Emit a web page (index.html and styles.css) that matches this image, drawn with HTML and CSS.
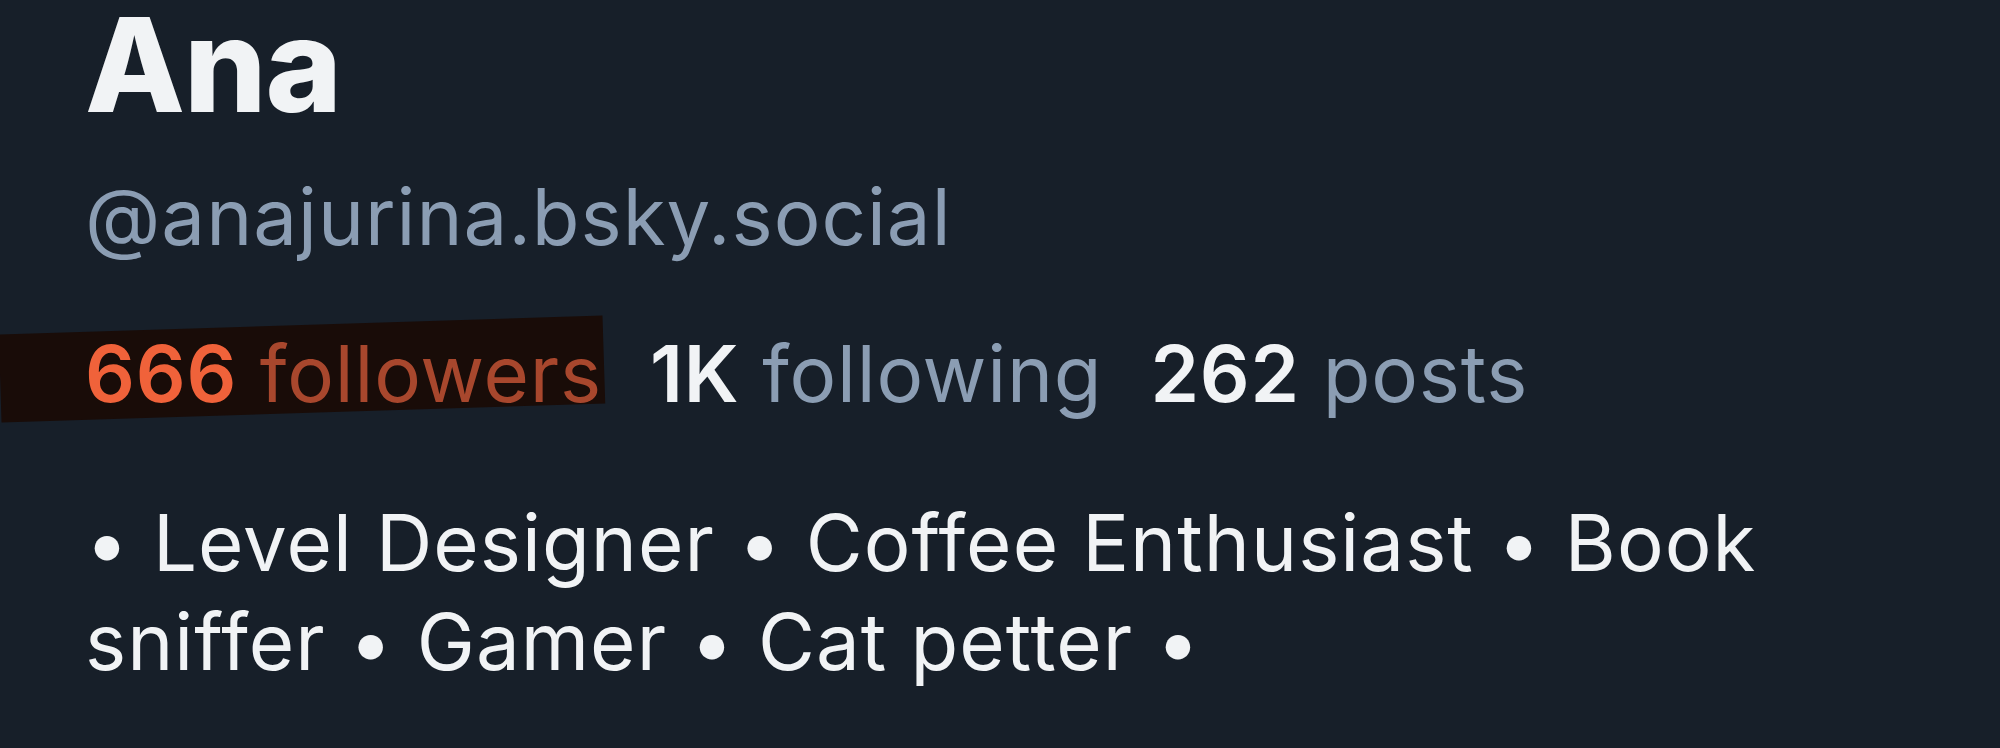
FILE: index.html
```html
<!DOCTYPE html>
<html>
    <head>
        <meta charset="UTF-8">
        <title>Ana - profile</title>
        <link rel="stylesheet" href="styles.css">
    </head>
    <body>
        <div id="profile">
            <div class="name">Ana</div>
            <div class="handle">@anajurina.bsky.social</div>
            <div class="stats">
                <span class="stat marked"><b>666</b> followers</span>
                <span class="stat"><b>1K</b> following</span>
                <span class="stat"><b>262</b> posts</span>
            </div>
            <p class="bio">• Level Designer • Coffee Enthusiast • Book sniffer • Gamer • Cat petter •</p>
        </div>
    </body>
</html>
```

FILE: styles.css
```css
body{
    margin: 0;
    background: #171f29;
    color: #f1f3f5;
    font-family: Inter, "Noto Sans", sans-serif;
    overflow: hidden;
}

#profile{
    padding-left: 85px;
    max-width: 1800px;
}

.name{
    margin-top: -13px;
    font-size: 130px;
    line-height: 156px;
    font-weight: 800;
    letter-spacing: -1px;
}

.handle{
    margin-top: 24px;
    font-size: 78px;
    line-height: 100px;
    letter-spacing: 1px;
    color: #8b9db3;
}

.stats{
    display: flex;
    gap: 48px;
    margin-top: 57px;
    font-size: 78px;
    line-height: 100px;
    letter-spacing: 0.8px;
    color: #8b9db3;
}

.stat b{
    font-weight: 600;
    color: #f1f3f5;
}

.marked{
    position: relative;
    z-index: 0;
    color: #a8472d;
}

.marked b{
    color: #f0623a;
}

/* highlighter stroke over the followers count */
.marked::before{
    content: "";
    position: absolute;
    left: -85px;
    right: -2px;
    top: 1px;
    bottom: 11px;
    background: #190c08;
    transform: rotate(-1.8deg);
    z-index: -1;
}

.bio{
    margin: 69px 0 0;
    font-size: 78px;
    line-height: 99px;
    letter-spacing: 1.05px;
}
```
